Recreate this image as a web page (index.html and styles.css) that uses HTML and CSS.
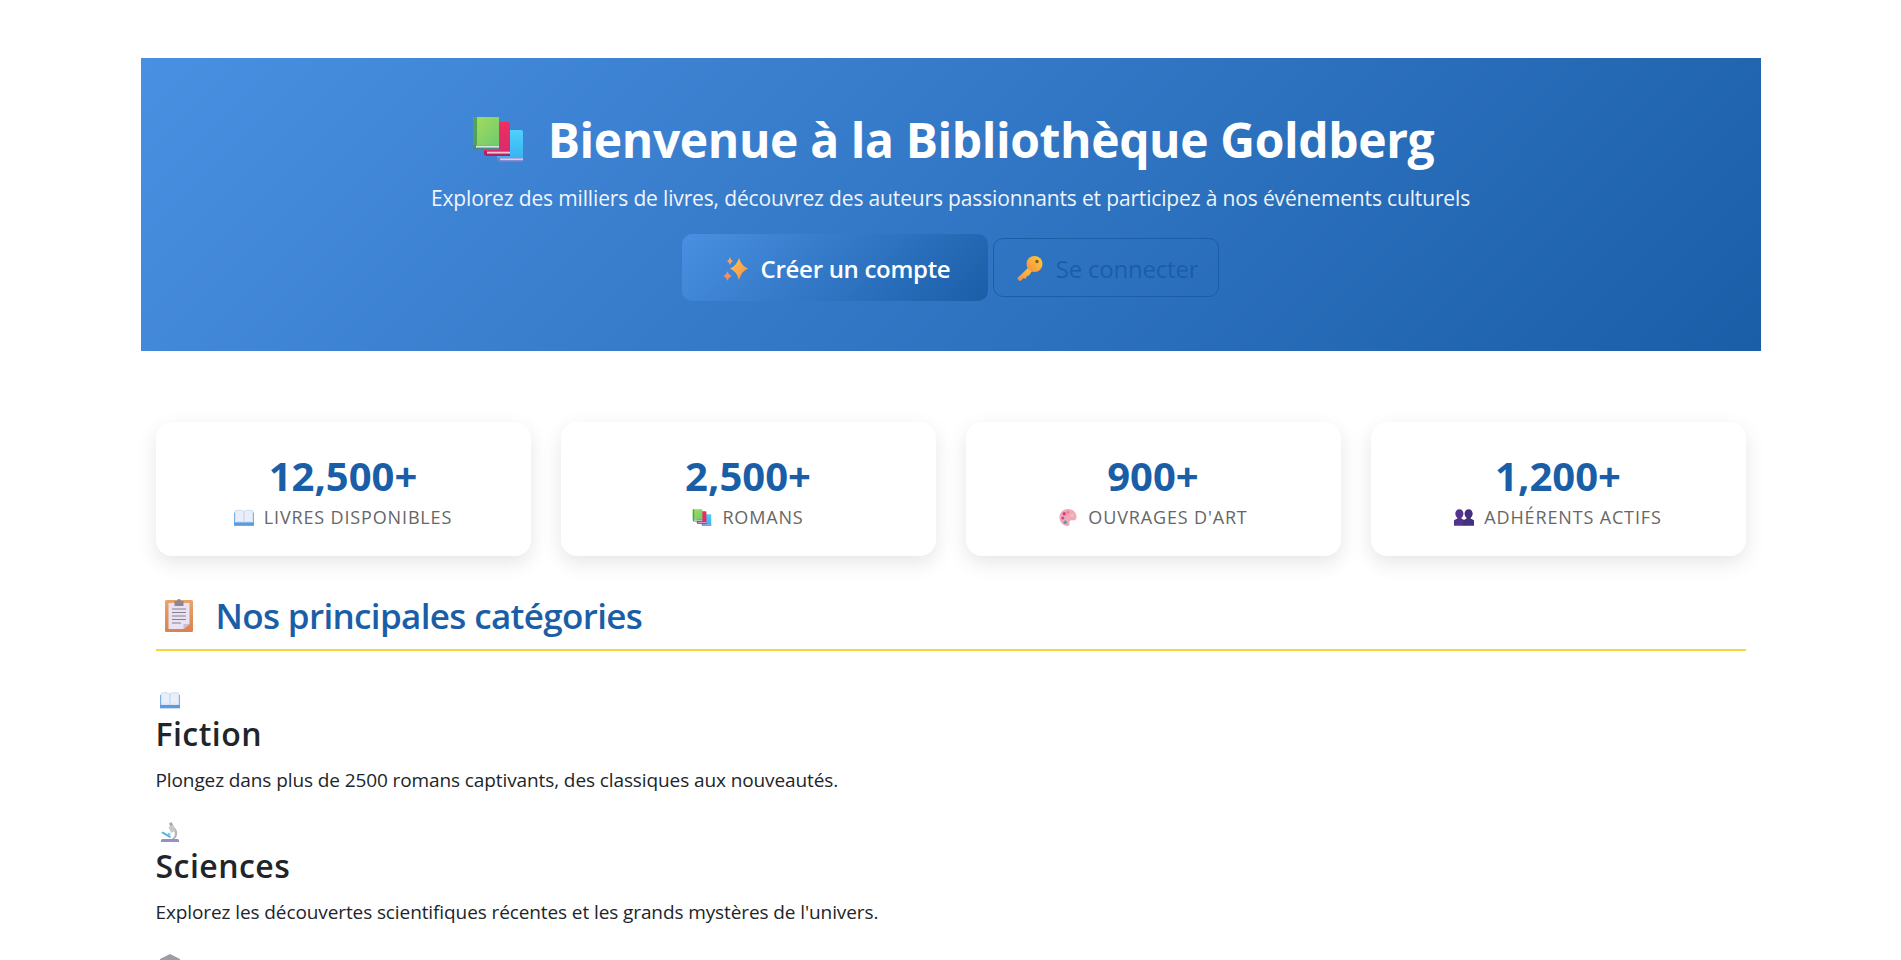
FILE: index.html
```html
<!DOCTYPE html>
<html lang="fr">

<head>
    <meta charset="UTF-8">
    <meta name="viewport" content="width=device-width, initial-scale=1.0">
    <title>Bibliothèque Goldberg</title>
    <link rel="stylesheet" href="styles.css">
</head>

<body>
    <svg class="sprite" aria-hidden="true">
        <defs>
            <linearGradient id="gGreen" x1="0" y1="0" x2="1" y2="1"><stop offset="0" stop-color="#a6dc5c"/><stop offset="1" stop-color="#6fcb6e"/></linearGradient>
            <linearGradient id="gRed" x1="0" y1="0" x2="0" y2="1"><stop offset="0" stop-color="#ee2f5f"/><stop offset="1" stop-color="#dc2a6c"/></linearGradient>
            <linearGradient id="gBlue" x1="0" y1="0" x2="0" y2="1"><stop offset="0" stop-color="#4fd0fb"/><stop offset="1" stop-color="#35b2f2"/></linearGradient>
            <linearGradient id="gStar" x1="0" y1="0" x2="1" y2="1"><stop offset="0" stop-color="#ffc84a"/><stop offset="1" stop-color="#f98a4e"/></linearGradient>
            <linearGradient id="gKey" x1="1" y1="0" x2="0" y2="1"><stop offset="0" stop-color="#ffd02e"/><stop offset="1" stop-color="#f58a4c"/></linearGradient>
            <linearGradient id="gBoard" x1="0" y1="0" x2="0" y2="1"><stop offset="0" stop-color="#e8a468"/><stop offset="1" stop-color="#d9824f"/></linearGradient>
        </defs>
        <symbol id="i-books" viewBox="0 0 50 46">
            <path d="M26 14h22a2 2 0 0 1 2 2v28H29l-5-2V16a2 2 0 0 1 2-2z" fill="url(#gBlue)"/>
            <path d="M24 42h26v4H27a3 3 0 0 1-3-3z" fill="#6f7fcb"/>
            <rect x="27" y="42.400" width="23" height="1.800" fill="#dcc7ee"/>
            <path d="M13 6h22a2 2 0 0 1 2 2v28H14l-3-1V8a2 2 0 0 1 2-2z" fill="url(#gRed)"/>
            <path d="M11 35h26v5H14a3 3 0 0 1-3-3z" fill="#b3205f"/>
            <rect x="14" y="35.600" width="23" height="2" fill="#f3c2dc"/>
            <path d="M2 1h24v28H0V3a2 2 0 0 1 2-2z" fill="url(#gGreen)"/>
            <path d="M2 1h2v28H0V3a2 2 0 0 1 2-2z" fill="#4fa35a"/>
            <path d="M0 29h26v5H3a3 3 0 0 1-3-3z" fill="#4f8a72"/>
            <rect x="3" y="29.600" width="23" height="2" fill="#d8e4ee"/>
        </symbol>
        <symbol id="i-spark" viewBox="0 0 25 24">
            <path d="M16 1Q18.500 9 25 11.500 18.500 14 16 23 13.500 14 7 11.500 13.500 9 16 1z" fill="url(#gStar)"/>
            <path d="M7 0Q7.800 3 10 4 7.800 5 7 8 6.200 5 4 4 6.200 3 7 0z" fill="#f9a65a"/>
            <path d="M4.500 14Q5.400 17.700 9 19 5.400 20.300 4.500 24 3.600 20.300 0 19 3.600 17.700 4.500 14z" fill="#f58d5c"/>
        </symbol>
        <symbol id="i-key" viewBox="0 0 26 25">
            <path d="M12 11 1 21.500a1.500 1.500 0 0 0 0 2l1 1a1.500 1.500 0 0 0 2 0l2.500-2.500 2 1 1.500-3 2-.5 4-6z" fill="url(#gKey)"/>
            <circle cx="17.500" cy="8" r="8" fill="url(#gKey)"/>
            <circle cx="20" cy="5.500" r="1.700" fill="#7a5a2a"/>
        </symbol>
        <symbol id="i-book" viewBox="0 0 18 15">
            <path d="M0 3v10.500h18V3h-1v9H1V3z" fill="#6fa8e6"/>
            <path d="M1 1.500C3.500.6 6.500.6 8.800 1.800V12C6.500 11 3.500 11 1 12z" fill="#e8eefa" stroke="#b9c9ea" stroke-width=".5"/>
            <path d="M17 1.500C14.500.6 11.500.6 9.200 1.800V12c2.300-1 5.300-1 7.800 0z" fill="#e8eefa" stroke="#b9c9ea" stroke-width=".5"/>
            <rect y="12" width="18" height="3" fill="#5a9be0"/>
        </symbol>
        <symbol id="i-palette" viewBox="0 0 18 18">
            <path d="M9 0C3.500 0 0 4 0 9c0 5 4 9 8.500 9 2 0 2.500-1.200 2-2.700-.6-1.800.5-3.300 2.500-3.300h2c1.800 0 3-1.300 3-3.300C18 3.500 14 0 9 0z" fill="#f3a9b4"/>
            <circle cx="5" cy="5" r="1.800" fill="#d83f7e"/>
            <circle cx="3.500" cy="9.500" r="1.600" fill="#c04aa0"/>
            <circle cx="9" cy="3.500" r="1.500" fill="#ee7a9a"/>
            <circle cx="6" cy="14" r="1.800" fill="#4d9fc0"/>
            <circle cx="13.500" cy="6.500" r="1.600" fill="#e8c0c8"/>
        </symbol>
        <symbol id="i-busts" viewBox="0 0 18 15">
            <path d="M4.800 0C7 0 8.500 1.800 8.500 4c0 1.600-.7 3-1.800 3.800v.7L9.500 10v5H0v-5l3-1.500v-.7C1.900 7 1.200 5.600 1.200 4 1.200 1.800 2.700 0 4.800 0z" fill="#53338c"/>
            <path d="M13.200 0c2.100 0 3.600 1.800 3.600 4 0 1.600-.7 3-1.800 3.800v.7l3 1.500v5H8.500v-5l2.800-1.500v-.7C10.200 7 9.500 5.600 9.500 4c0-2.200 1.600-4 3.700-4z" fill="#45307e"/>
        </symbol>
        <symbol id="i-clip" viewBox="0 0 28 34">
            <rect y="2" width="28" height="32" rx="1.500" fill="url(#gBoard)"/>
            <path d="M3.500 5h21v21l-6 5h-15z" fill="#e9e1f4"/>
            <path d="M24.500 26h-6v5z" fill="#c8bcd6"/>
            <path d="M9.500 3h2.500a2 2 0 0 1 4 0h2.500v5h-9z" fill="#8f8694"/>
            <path d="M7 11h14M7 14.500h14M7 18h14M7 21.500h14M7 25h9" stroke="#85808c" stroke-width="1"/>
        </symbol>
        <symbol id="i-micro" viewBox="0 0 20 20">
            <path d="M1 20v-1.500a1.500 1.500 0 0 1 1.500-1.500h15a1.500 1.500 0 0 1 1.500 1.500V20z" fill="#9a8cc4"/>
            <path d="M9 1.500 11.500 0l2.500 5-2.500 1.500z" fill="#a9a6ae"/>
            <path d="M14 5c4 3 4.500 9 .5 12h-3c4-2 4.500-7 1-10z" fill="#b8b6bc"/>
            <path d="M8.500 5 13 3l2.500 5.500L11 11z" fill="#c9c7cc"/>
            <path d="M2.500 9.500l8.500 5-1 1.600-8.500-5z" fill="#47aee0"/>
            <path d="M8.500 10.500l2.500 1.500-1.200 1.800-2.500-1.500z" fill="#8bc8e6"/>
        </symbol>
        <symbol id="i-bank" viewBox="0 0 20 20">
            <path d="M10 0l10 5v2H0V5z" fill="#a09ca6"/>
            <rect x="1" y="7" width="18" height="2" fill="#b4b0b8"/>
            <path d="M3 9h3v8H3zm5.500 0h3v8h-3zM14 9h3v8h-3z" fill="#b4b0b8"/>
            <rect y="17" width="20" height="3" fill="#8f8a94"/>
        </symbol>
    </svg>

    <main class="page">
        <section class="hero">
            <h1 class="hero-title">
                <svg class="ico ico-books"><use href="#i-books"/></svg>
                <span>Bienvenue à la Bibliothèque Goldberg</span>
            </h1>
            <p class="hero-sub">Explorez des milliers de livres, découvrez des auteurs passionnants et participez à nos événements culturels</p>
            <div class="hero-actions">
                <a class="btn btn-primary" href="#">
                    <svg class="ico ico-spark"><use href="#i-spark"/></svg>
                    <span>Créer un compte</span>
                </a>
                <a class="btn btn-outline" href="#">
                    <svg class="ico ico-key"><use href="#i-key"/></svg>
                    <span>Se connecter</span>
                </a>
            </div>
        </section>

        <div class="content">
            <section class="stats">
                <div class="stat">
                    <div class="stat-num">12,500+</div>
                    <div class="stat-label"><svg class="ico ico-sm"><use href="#i-book"/></svg>Livres disponibles</div>
                </div>
                <div class="stat">
                    <div class="stat-num">2,500+</div>
                    <div class="stat-label"><svg class="ico ico-sm"><use href="#i-books"/></svg>Romans</div>
                </div>
                <div class="stat">
                    <div class="stat-num">900+</div>
                    <div class="stat-label"><svg class="ico ico-sm"><use href="#i-palette"/></svg>Ouvrages d'art</div>
                </div>
                <div class="stat">
                    <div class="stat-num">1,200+</div>
                    <div class="stat-label"><svg class="ico ico-sm"><use href="#i-busts"/></svg>Adhérents actifs</div>
                </div>
            </section>

            <h2 class="section-title">
                <svg class="ico ico-clip"><use href="#i-clip"/></svg>
                <span>Nos principales catégories</span>
            </h2>

            <article class="cat">
                <svg class="ico cat-ico"><use href="#i-book"/></svg>
                <h3>Fiction</h3>
                <p>Plongez dans plus de 2500 romans captivants, des classiques aux nouveautés.</p>
            </article>
            <article class="cat">
                <svg class="ico cat-ico"><use href="#i-micro"/></svg>
                <h3>Sciences</h3>
                <p>Explorez les découvertes scientifiques récentes et les grands mystères de l'univers.</p>
            </article>
            <article class="cat">
                <svg class="ico cat-ico"><use href="#i-bank"/></svg>
            </article>
        </div>
    </main>
</body>

</html>
```

FILE: styles.css
```css
* {
    box-sizing: border-box;
}

html,
body {
    height: 100%;
    overflow: hidden;
}

body {
    margin: 0;
    background: #fff;
    color: #212529;
    font-family: "Open Sans", "Noto Sans", sans-serif;
}

.sprite {
    display: block;
    width: 0;
    height: 0;
}

.ico {
    display: block;
    flex: none;
}

.page {
    width: 1620px;
    margin: 58px auto 0;
}

.hero {
    height: 293px;
    padding-top: 47px;
    background: linear-gradient(135deg, #4a90e2, #1a5ea8);
    color: #fff;
    text-align: center;
}

.hero-title {
    display: flex;
    justify-content: center;
    align-items: center;
    gap: 25px;
    height: 68px;
    margin: 0;
    padding-left: 6px;
    font-size: 48px;
    font-weight: 700;
    letter-spacing: -.4px;
}

.ico-books {
    width: 50px;
    height: 46px;
}

.hero-sub {
    margin: 11px 0 0;
    font-size: 21px;
    line-height: 28px;
    letter-spacing: -.15px;
    opacity: .92;
}

.hero-actions {
    display: flex;
    justify-content: center;
    align-items: center;
    gap: 5px;
    margin-top: 22px;
    padding-right: 1px;
}

.btn {
    display: flex;
    justify-content: center;
    align-items: center;
    gap: 13px;
    padding: 2px 0 0 4px;
    border-radius: 10px;
    font-size: 24px;
    letter-spacing: -.3px;
    text-decoration: none;
}

.btn-primary {
    width: 306px;
    height: 67px;
    background: linear-gradient(135deg, #4a90e2, #1a5ea8);
    color: #fff;
    font-weight: 600;
}

.btn-outline {
    width: 226px;
    height: 59px;
    border: 1px solid #1a5ea8;
    color: #1a5ea8;
    letter-spacing: -.2px;
}

.ico-spark {
    width: 25px;
    height: 24px;
}

.ico-key {
    width: 26px;
    height: 25px;
}

.content {
    padding: 0 15px;
}

.stats {
    display: grid;
    grid-template-columns: repeat(4, 1fr);
    gap: 30px;
    margin-top: 71px;
}

.stat {
    height: 134px;
    padding-top: 30px;
    border-radius: 16px;
    background: #fff;
    box-shadow: 0 7px 20px rgba(0, 0, 0, .1);
    text-align: center;
}

.stat-num {
    color: #1a5ea8;
    font-size: 40px;
    font-weight: 700;
    line-height: 48px;
}

.stat-label {
    display: flex;
    justify-content: center;
    align-items: center;
    gap: 10px;
    margin-top: 5px;
    color: #666;
    font-size: 18px;
    line-height: 24px;
    letter-spacing: .85px;
    text-transform: uppercase;
}

.ico-sm {
    width: 20px;
    height: 17px;
}

.section-title {
    display: flex;
    align-items: center;
    gap: 23px;
    height: 56px;
    margin: 39px 0 0;
    padding: 0 0 14px 9px;
    border-bottom: 2px solid #f5d63d;
    color: #1a5ea8;
    font-size: 35px;
    font-weight: 600;
    letter-spacing: -.65px;
}

.ico-clip {
    width: 28px;
    height: 34px;
}

.cat {
    height: 132px;
    padding-left: 4px;
}

.cat:first-of-type {
    margin-top: 39px;
}

.cat-ico {
    width: 20px;
    height: 20px;
}

.cat h3 {
    margin: 2px 0 0 -4px;
    font-size: 32px;
    font-weight: 600;
    line-height: 44px;
    letter-spacing: .45px;
}

.cat p {
    margin: 11px 0 0 -4px;
    font-size: 19px;
    line-height: 27px;
    letter-spacing: -.1px;
}
```
